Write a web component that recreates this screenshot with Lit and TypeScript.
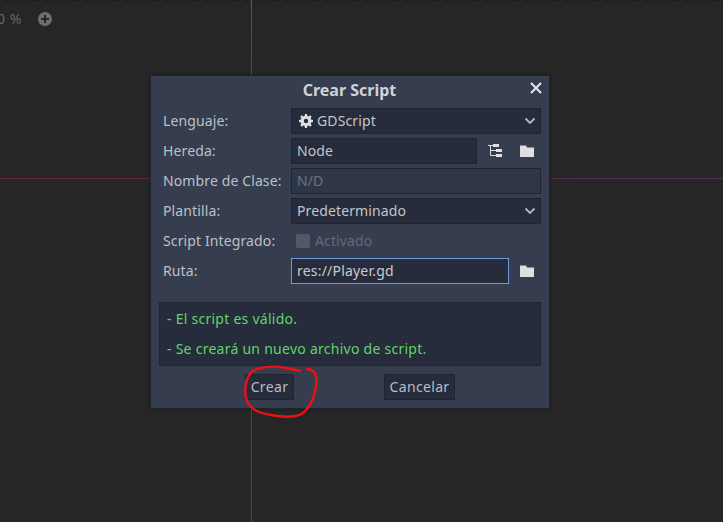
import { LitElement, html, css, svg } from "lit";
import { customElement } from "lit/decorators.js";

const folder = html`<svg class="ico" width="16" height="16" viewBox="0 0 16 16"><path fill="#e0e0e0" d="M1 2.500h6l1 2h7v9.500H1z"/></svg>`;
const tree = html`<svg class="ico" width="16" height="16" viewBox="0 0 16 16"><path fill="#e0e0e0" d="M6 1h6v3H6zM9 6h6v3H9zM9 11h6v3H9z"/><path fill="none" stroke="#e0e0e0" d="M1 2.500h5M3.500 2.500v10M3.500 7.500H9M3.500 12.500H9"/></svg>`;
const chevron = html`<svg class="chev" width="12" height="8" viewBox="0 0 12 8"><path fill="none" stroke="#b4b7be" stroke-width="1.800" d="M1.500 1.500 6 6l4.500-4.500"/></svg>`;
const gear = html`<svg class="gear" width="16" height="16" viewBox="0 0 16 16"><path fill="#e0e0e0" fill-rule="evenodd" d="M7 1h2l.4 1.900 1.200.5 1.600-1.100 1.500 1.500-1.100 1.600.5 1.200L15 7v2l-1.900.4-.5 1.200 1.100 1.600-1.500 1.500-1.600-1.100-1.200.5L9 15H7l-.4-1.900-1.200-.5-1.600 1.100-1.500-1.500 1.100-1.600-.5-1.200L1 9V7l1.900-.4.5-1.200-1.100-1.600 1.500-1.500 1.600 1.100 1.200-.5zM8 5.800a2.200 2.200 0 1 0 0 4.400 2.200 2.200 0 0 0 0-4.400z"/></svg>`;

@customElement("app-root")
export class AppRoot extends LitElement {
  static styles = css`
    :host { display: block; width: 723px; height: 522px; }
    .canvas { position: relative; width: 723px; height: 522px; overflow: hidden; background: #262626; font-family: "Noto Sans", sans-serif; font-size: 14px; color: #c2c5cc; }
    .ruler { position: absolute; left: 0; right: 0; top: 0; height: 1px; background: repeating-linear-gradient(90deg, #3a3a3a 0 1px, #1d1d1d 1px 10px); }
    .vline { position: absolute; left: 251px; top: 0; bottom: 0; width: 1px; background: linear-gradient(#4f6428, #434b3e 80px); }
    .hline { position: absolute; left: 0; right: 0; top: 178px; height: 1px; background: linear-gradient(90deg, #642735, #5a2a50 600px); }
    .zoom { position: absolute; left: 0; top: 9px; display: flex; align-items: center; gap: 17px; color: #666; }
    .zoom span { margin-left: -3px; word-spacing: 1px; }
    .plus { width: 14px; height: 14px; display: block; }
    .dialog { position: absolute; left: 150px; top: 75px; width: 400px; height: 334px; box-sizing: border-box; border: 1px solid #1f242e; background: #353d4f; padding: 0 8px; display: flex; flex-direction: column; box-shadow: 0 0 3px rgba(0,0,0,.4); }
    .title { height: 27px; flex: none; position: relative; display: flex; align-items: center; justify-content: center; font-weight: 700; font-size: 16px; color: #d0d2d8; padding: 1px 1px 0 0; box-sizing: border-box; }
    .close { position: absolute; right: -2px; top: 5px; width: 14px; height: 14px; }
    .form { margin: 5px 0 0 4px; display: grid; grid-template-columns: 128px 250px; grid-auto-rows: 26px; row-gap: 4px; align-items: center; letter-spacing: .12px; }
    .label { color: #bdc0c8; padding-bottom: 2px; }
    .field { box-sizing: border-box; height: 26px; background: #262c3b; border: 1px solid #20242f; display: flex; align-items: center; padding: 0 5px 2px; position: relative; white-space: nowrap; }
    .field.disabled { background: #2f3647; color: #6b7180; }
    .field.focus { border-color: #6a9cdd; color: #c8cad0; letter-spacing: .2px; }
    .chev { position: absolute; right: 4px; top: 8px; }
    .gear { margin: 2px 3px 0 1px; flex: none; }
    .with { display: flex; align-items: center; }
    .with .field { flex: none; width: 186px; }
    .with .focus { width: 218px; }
    .with .ico { flex: none; margin-left: 10px; }
    .with .ico + .ico { margin-left: 16px; }
    .check { display: flex; align-items: center; gap: 5px; color: #636979; padding: 0 0 2px 5px; }
    .box { width: 14px; height: 14px; border-radius: 2px; background: #525869; margin-top: 2px; }
    .panel { box-sizing: border-box; margin: 18px 0 0; height: 64px; width: 382px; flex: none; background: #262c3b; border: 1px solid #20242f; padding: 6px 7px 0; color: #5fd56c; display: flex; flex-direction: column; gap: 10px; line-height: 20px; letter-spacing: .26px; }
    .buttons { margin: 8px 0 0 86px; display: flex; gap: 90px; }
    .btn { box-sizing: border-box; height: 26px; background: #262c3b; border: 1px solid #20242f; display: flex; align-items: center; justify-content: center; color: #b9bcc4; padding-bottom: 1px; letter-spacing: .35px; }
    .b1 { width: 49px; }
    .b2 { width: 71px; }
    .scribble { position: absolute; left: 0; top: 0; pointer-events: none; }
  `;

  render() {
    return html`<div class="canvas">
      <div class="ruler"></div><div class="vline"></div><div class="hline"></div>
      <div class="zoom"><span>0 %</span><svg class="plus" viewBox="0 0 14 14"><circle cx="7" cy="7" r="7" fill="#6e6e6e"/><path d="M7 3v8M3 7h8" stroke="#262626" stroke-width="2"/></svg></div>
      <div class="dialog">
        <div class="title">Crear Script
          <svg class="close" viewBox="0 0 14 14"><path d="M2 2l10 10M12 2 2 12" stroke="#e6e6e6" stroke-width="2"/></svg>
        </div>
        <div class="form">
          <div class="label">Lenguaje:</div>
          <div class="field">${gear}GDScript${chevron}</div>
          <div class="label">Hereda:</div>
          <div class="with"><div class="field">Node</div>${tree}${folder}</div>
          <div class="label">Nombre de Clase:</div>
          <div class="field disabled">N/D</div>
          <div class="label">Plantilla:</div>
          <div class="field">Predeterminado${chevron}</div>
          <div class="label">Script Integrado:</div>
          <div class="check"><span class="box"></span>Activado</div>
          <div class="label">Ruta:</div>
          <div class="with"><div class="field focus">res://Player.gd</div>${folder}</div>
        </div>
        <div class="panel"><div>- El script es válido.</div><div>- Se creará un nuevo archivo de script.</div></div>
        <div class="buttons"><div class="btn b1">Crear</div><div class="btn b2">Cancelar</div></div>
      </div>
      <svg class="scribble" width="723" height="522" viewBox="0 0 723 522">${svg`<path fill="none" stroke="#ee1111" stroke-width="2.400" stroke-linecap="round" stroke-linejoin="round" d="M300 371 C292 369 287 368 280 367 C273 366 266 367 260 368 C255 370 251 371 250 374 C247 378 246 383 245.500 387 C245 392 245 396 247 401 C249 405 252 409 257 411 C263 414 270 415 277 416 C285 417 291 417 295 416 C300 415 303 414 305 411 C308 408 309 406 311 403 C314 398 315 392 316 385 C317 380 316 376 315 373 C313 370 310 369 307 369"/>`}</svg>
    </div>`;
  }
}
